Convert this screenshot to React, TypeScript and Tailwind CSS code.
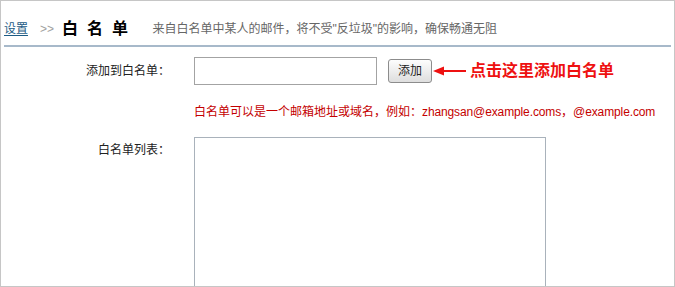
import React from "react";

export default function App() {
  return (
    <div className="w-[675px] h-[287px] overflow-hidden border border-[#c6c6c6] bg-white font-['Liberation_Sans','Noto_Sans_CJK_SC',sans-serif] text-[12px] leading-[16px] text-[#333]">
      <div className="flex h-[44px] items-center pl-[3px] pt-[12px]">
        <a href="#" className="text-[#1d5c85] underline underline-offset-2">设置</a>
        <span className="ml-[12px] text-[#a0a0a0]">&gt;&gt;</span>
        <span className="ml-[8px] text-[16px] font-bold tracking-[2.3px] text-black">白 名 单</span>
        <span className="ml-[22px] text-[#666]">来自白名单中某人的邮件，将不受"反垃圾"的影响，确保畅通无阻</span>
      </div>
      <div className="mx-[3px] h-[2px] bg-[#a7b9ca]" />

      <div className="mt-[10px] flex items-center">
        <div className="w-[169px] text-right text-[#222]">添加到白名单：</div>
        <input
          type="text"
          className="ml-[24px] h-[28px] w-[183px] border border-[#a3a3a3] bg-white outline-none"
        />
        <button className="ml-[11px] h-[24px] w-[44px] rounded-[3px] border border-[#8c8c8c] bg-gradient-to-b from-[#fdfdfd] to-[#dedede] text-[12px] text-[#222]">
          添加
        </button>
        <svg width="33" height="10" viewBox="0 0 33 10" className="ml-[1px]">
          <polygon points="0,5 11,0.5 11,9.5" fill="#ee1111" />
          <rect x="10" y="4" width="23" height="2" fill="#ee1111" />
        </svg>
        <span className="ml-[4px] text-[16px] font-bold leading-[20px] text-[#ee1111]">点击这里添加白名单</span>
      </div>

      <div className="ml-[193px] mt-[19px] text-[#c40000]">
        白名单可以是一个邮箱地址或域名，例如：<span className="tracking-[-0.12px]">zhangsan@example.coms</span>，<span className="tracking-[-0.12px]">@example.com</span>
      </div>

      <div className="mt-[17px] flex items-start">
        <div className="w-[169px] pt-[5px] text-right text-[#222]">白名单列表：</div>
        <textarea className="ml-[24px] h-[160px] w-[352px] resize-none border border-[#a9b2bb] bg-white outline-none" />
      </div>
    </div>
  );
}
